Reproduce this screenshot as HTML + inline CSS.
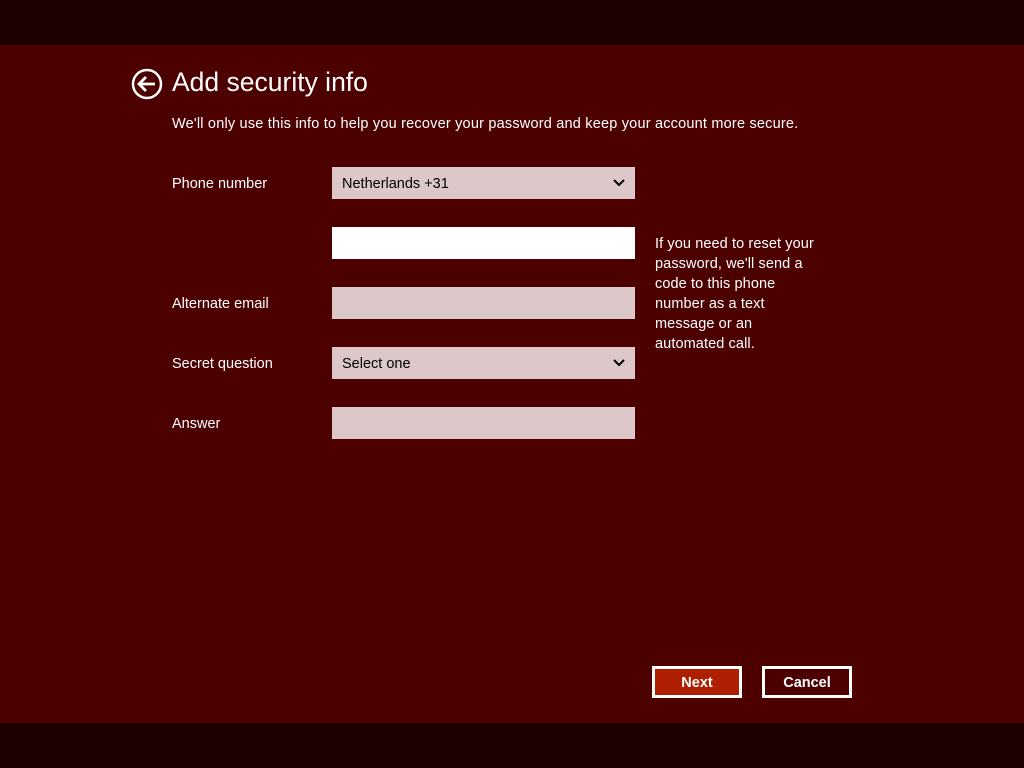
<!DOCTYPE html>
<html><head><style>
body{margin:0;width:1024px;height:768px;background:#1c0000;font-family:"Liberation Sans",sans-serif;position:relative;overflow:hidden;color:#fff}
.main{position:absolute;left:0;top:45px;width:1024px;height:678px;background:#4c0000}
.a{position:absolute;white-space:nowrap}
.lbl{font-size:14.5px;color:#fff}
.f{position:absolute;left:332px;width:303px;height:32px;background:#dcc8c9;color:#000;font-size:14.5px;box-sizing:border-box;padding:9px 10px}
.chev{position:absolute;right:10px;top:11px}
.btn{position:absolute;top:666px;width:90px;height:32px;box-sizing:border-box;border:3px solid #fff;font-weight:bold;font-size:14.5px;text-align:center;line-height:28px}
</style></head><body>
<div class="main"></div>
<svg class="a" style="left:131px;top:68px" width="32" height="32" viewBox="0 0 32 32"><circle cx="16" cy="16" r="14" fill="none" stroke="#fff" stroke-width="2.5"/><path d="M8 16H24M15 9L8 16L15 23" fill="none" stroke="#fff" stroke-width="2.8"/></svg>
<div class="a" style="left:172px;top:67px;font-size:26.5px">Add security info</div>
<div class="a" style="left:172px;top:116px;font-size:14.5px;letter-spacing:0.2px">We'll only use this info to help you recover your password and keep your account more secure.</div>
<div class="a lbl" style="left:172px;top:176px">Phone number</div>
<div class="a lbl" style="left:172px;top:296px">Alternate email</div>
<div class="a lbl" style="left:172px;top:356px">Secret question</div>
<div class="a lbl" style="left:172px;top:416px">Answer</div>
<div class="f" style="top:167px">Netherlands +31<svg class="chev" width="12" height="10" viewBox="0 0 12 10"><path d="M1 2L6 7L11 2" fill="none" stroke="#000" stroke-width="2"/></svg></div>
<div class="f" style="top:227px;background:#fff"></div>
<div class="f" style="top:287px"></div>
<div class="f" style="top:347px">Select one<svg class="chev" width="12" height="10" viewBox="0 0 12 10"><path d="M1 2L6 7L11 2" fill="none" stroke="#000" stroke-width="2"/></svg></div>
<div class="f" style="top:407px"></div>
<div class="a" style="left:655px;top:234px;font-size:14.5px;line-height:20px;letter-spacing:0.1px">If you need to reset your<br>password, we'll send a<br>code to this phone<br>number as a text<br>message or an<br>automated call.</div>
<div class="btn" style="left:652px;background:#b01e00">Next</div>
<div class="btn" style="left:762px;background:#4c0000">Cancel</div>
</body></html>
